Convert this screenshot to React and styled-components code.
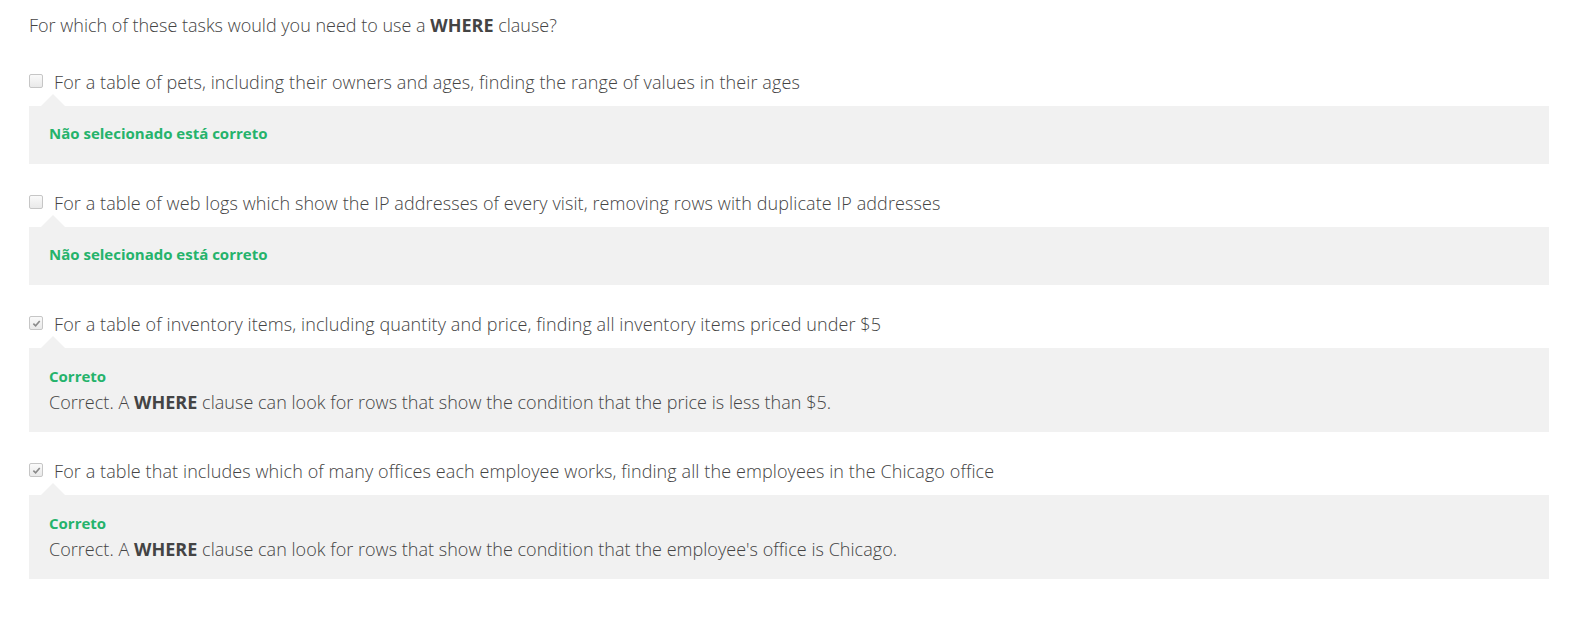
import React from "react";
import styled, { createGlobalStyle } from "styled-components";

const GlobalStyle = createGlobalStyle`
  html, body {
    margin: 0;
    padding: 0;
    background: #ffffff;
  }
  body {
    font-family: "Open Sans", "Liberation Sans", sans-serif;
    color: #444444;
  }
`;

const Page = styled.div`
  padding: 12px 28px 40px 29px;
`;

const Prompt = styled.div`
  font-size: 18px;
  font-weight: 300;
  line-height: 26px;
  margin-bottom: 31px;
  b {
    font-weight: 700;
  }
`;

const OptionList = styled.div`
  display: flex;
  flex-direction: column;
  gap: 26px;
`;

const Option = styled.div`
  display: flex;
  flex-direction: column;
`;

const OptionRow = styled.label`
  display: flex;
  align-items: flex-start;
  gap: 11px;
  font-size: 18px;
  font-weight: 300;
  letter-spacing: 0.1px;
  line-height: 26px;
  padding-bottom: 11px;
`;

const Box = styled.span`
  flex: none;
  width: 12px;
  height: 12px;
  margin-top: 5px;
  border: 1px solid #c6c6c6;
  border-radius: 2px;
  background: linear-gradient(#fafafa, #e9e9e9);
  display: flex;
  align-items: center;
  justify-content: center;
`;

const Feedback = styled.div`
  position: relative;
  background: #f1f1f1;
  padding: 17px 20px 17px;
  &::before {
    content: "";
    position: absolute;
    top: -12px;
    left: 12px;
    border-left: 12px solid transparent;
    border-right: 12px solid transparent;
    border-bottom: 12px solid #f1f1f1;
  }
`;

const Verdict = styled.div`
  color: #25b36b;
  font-size: 15px;
  font-weight: 700;
  line-height: 22px;
  margin: ${(p) => (p.$alone ? "-1px 0 3px" : "0 0 2px")};
`;

const Explanation = styled.div`
  font-size: 18px;
  font-weight: 300;
  letter-spacing: 0.03px;
  line-height: 26px;
  b {
    font-weight: 700;
  }
`;

const Check = () => (
  <svg width="9" height="9" viewBox="0 0 10 10">
    <path d="M1.5 5.2 L4 7.6 L8.6 2.2" fill="none" stroke="#8a8a8a" strokeWidth="1.8" />
  </svg>
);

const options = [
  {
    text: "For a table of pets, including their owners and ages, finding the range of values in their ages",
    checked: false,
  },
  {
    text: "For a table of web logs which show the IP addresses of every visit, removing rows with duplicate IP addresses",
    checked: false,
  },
  {
    text: "For a table of inventory items, including quantity and price, finding all inventory items priced under $5",
    checked: true,
    note: "that the price is less than $5.",
  },
  {
    text: "For a table that includes which of many offices each employee works, finding all the employees in the Chicago office",
    checked: true,
    note: "that the employee's office is Chicago.",
  },
];

export default function App() {
  return (
    <>
      <GlobalStyle />
      <Page>
        <Prompt>
          For which of these tasks would you need to use a <b>WHERE</b> clause?
        </Prompt>
        <OptionList>
          {options.map((o, i) => (
            <Option key={i}>
              <OptionRow>
                <Box>{o.checked && <Check />}</Box>
                <span>{o.text}</span>
              </OptionRow>
              <Feedback>
                {o.checked ? (
                  <>
                    <Verdict>Correto</Verdict>
                    <Explanation>
                      Correct. A <b>WHERE</b> clause can look for rows that show the condition {o.note}
                    </Explanation>
                  </>
                ) : (
                  <Verdict $alone>Não selecionado está correto</Verdict>
                )}
              </Feedback>
            </Option>
          ))}
        </OptionList>
      </Page>
    </>
  );
}
